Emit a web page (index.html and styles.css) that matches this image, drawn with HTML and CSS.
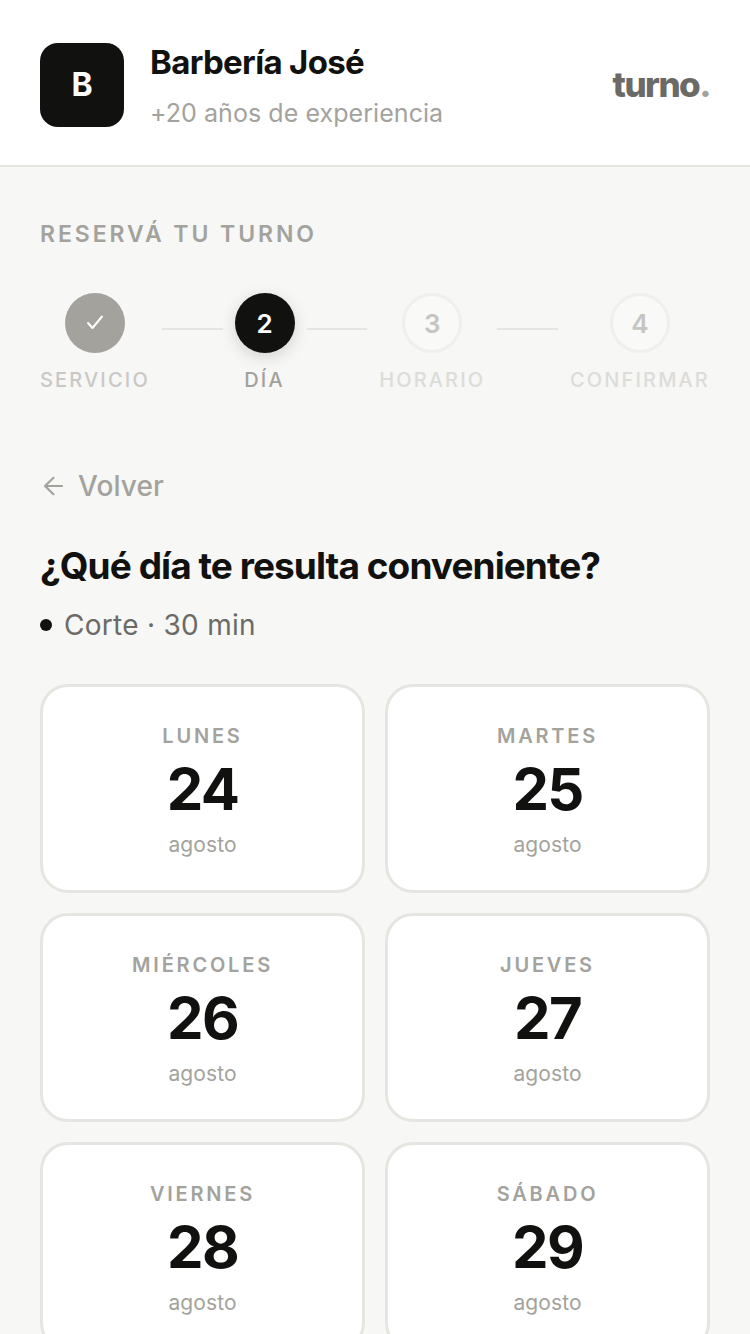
FILE: index.html
```html
<!DOCTYPE html>
<html lang="es">
<head>
<meta charset="utf-8">
<title>Barbería José</title>
<link rel="stylesheet" href="styles.css">
</head>
<body>
<header class="header">
  <div class="brand">
    <div class="logo">B</div>
    <div class="brand-text">
      <div class="brand-name">Barbería José</div>
      <div class="brand-sub">+20 años de experiencia</div>
    </div>
  </div>
  <div class="wordmark">turno<span class="wordmark-dot">.</span></div>
</header>
<main class="main">
  <div class="eyebrow">RESERVÁ TU TURNO</div>
  <div class="steps">
    <div class="step">
      <div class="circle done"><svg width="20" height="20" viewBox="0 0 20 20" fill="none"><path d="M3 10 L7.5 15 L17 3.5" stroke="#fff" stroke-width="2" stroke-linecap="round" stroke-linejoin="round"/></svg></div>
      <div class="step-label muted">SERVICIO</div>
    </div>
    <div class="line"></div>
    <div class="step">
      <div class="circle active">2</div>
      <div class="step-label current">DÍA</div>
    </div>
    <div class="line"></div>
    <div class="step">
      <div class="circle todo">3</div>
      <div class="step-label faint">HORARIO</div>
    </div>
    <div class="line"></div>
    <div class="step">
      <div class="circle todo">4</div>
      <div class="step-label faint">CONFIRMAR</div>
    </div>
  </div>
  <div class="back">
    <svg width="24" height="24" viewBox="0 0 24 24" fill="none"><path d="M22 12 H5 M13.5 3.8 L5 12 L13.5 20.2" stroke="#a3a29d" stroke-width="2.2" stroke-linecap="round" stroke-linejoin="round"/></svg>
    <span>Volver</span>
  </div>
  <h1 class="title">¿Qué día te resulta conveniente?</h1>
  <div class="service"><span class="bullet"></span><span>Corte · 30 min</span></div>
  <div class="grid">
    <div class="card"><div class="weekday">LUNES</div><div class="num">24</div><div class="month">agosto</div></div>
    <div class="card"><div class="weekday">MARTES</div><div class="num">25</div><div class="month">agosto</div></div>
    <div class="card"><div class="weekday">MIÉRCOLES</div><div class="num">26</div><div class="month">agosto</div></div>
    <div class="card"><div class="weekday">JUEVES</div><div class="num">27</div><div class="month">agosto</div></div>
    <div class="card"><div class="weekday">VIERNES</div><div class="num">28</div><div class="month">agosto</div></div>
    <div class="card"><div class="weekday">SÁBADO</div><div class="num">29</div><div class="month">agosto</div></div>
  </div>
</main>
</body>
</html>
```
FILE: styles.css
```css
* { box-sizing: border-box; }
html, body { margin: 0; padding: 0; }
body {
  background: #f7f7f5;
  font-family: Inter, "Liberation Sans", sans-serif;
  color: #111110;
  height: 1334px;
  overflow: hidden;
}
.header {
  height: 167px;
  background: #fff;
  border-bottom: 2px solid #e5e5e1;
  padding: 4px 40px 0;
  display: flex;
  align-items: center;
  justify-content: space-between;
}
.brand { display: flex; align-items: center; gap: 26px; }
.logo {
  width: 84px; height: 84px;
  background: #111110;
  border-radius: 18px;
  color: #fff;
  font-size: 32px;
  font-weight: 700;
  display: flex; align-items: center; justify-content: center;
}
.brand-text { display: flex; flex-direction: column; gap: 12px; }
.brand-name { font-size: 33px; font-weight: 700; line-height: 44px; letter-spacing: -0.66px; }
.brand-sub { font-size: 25px; line-height: 34px; letter-spacing: 0.06px; color: #a3a29d; }
.wordmark { font-size: 35px; font-weight: 800; letter-spacing: -1.55px; color: #6b6a66; line-height: 38px; margin-bottom: 2px; }
.wordmark-dot { color: #a3a29d; }
.main { padding: 52px 40px 0; }
.eyebrow { font-size: 23px; line-height: 30px; font-weight: 600; letter-spacing: 2.93px; color: #a3a29d; }
.steps { display: flex; gap: 12px; margin-top: 44px; align-items: flex-start; }
.step { display: flex; flex-direction: column; align-items: center; gap: 13px; }
.line { flex: 1; height: 2px; background: #e5e5e1; margin-top: 35px; }
.circle {
  width: 60px; height: 60px; border-radius: 50%;
  display: flex; align-items: center; justify-content: center;
  font-size: 26px; font-weight: 600;
}
.done { background: #a3a29d; }
.active { background: #111110; color: #fff; box-shadow: 0 4px 16px rgba(0,0,0,0.15); }
.todo { background: #f9f9f8; border: 3px solid #efefed; color: #c6c5c2; }
.step-label { font-size: 20px; line-height: 28px; font-weight: 500; letter-spacing: 2.15px; white-space: nowrap; }
.muted { color: #c9c8c5; }
.current { color: #a3a29d; }
.faint { color: #dcdcd9; }
.back { display: flex; align-items: center; gap: 14px; margin-top: 74px; font-size: 28px; line-height: 36px; font-weight: 500; letter-spacing: 0.1px; color: #a3a29d; }
.title { margin: 39px 0 0; font-size: 37px; line-height: 46px; font-weight: 700; letter-spacing: -0.93px; color: #111110; }
.service { display: flex; align-items: center; gap: 12px; margin-top: 18px; font-size: 28px; line-height: 36px; letter-spacing: 0.28px; color: #6b6a66; }
.bullet { width: 12px; height: 12px; border-radius: 50%; background: #111110; }
.grid { display: grid; grid-template-columns: 1fr 1fr; gap: 20px; margin-top: 41px; }
.card {
  height: 209px;
  background: #fff;
  border: 3px solid #e5e5e1;
  border-radius: 28px;
  display: flex; flex-direction: column; align-items: center;
  padding-top: 35px;
}
.weekday { font-size: 20px; line-height: 28px; font-weight: 600; letter-spacing: 2.8px; color: #a3a29d; }
.num { font-size: 58px; line-height: 58px; font-weight: 750; letter-spacing: -1.7px; color: #111110; margin-top: 10px; }
.month { font-size: 21px; line-height: 28px; color: #a3a29d; margin-top: 13px; letter-spacing: 0.1px; }
```
